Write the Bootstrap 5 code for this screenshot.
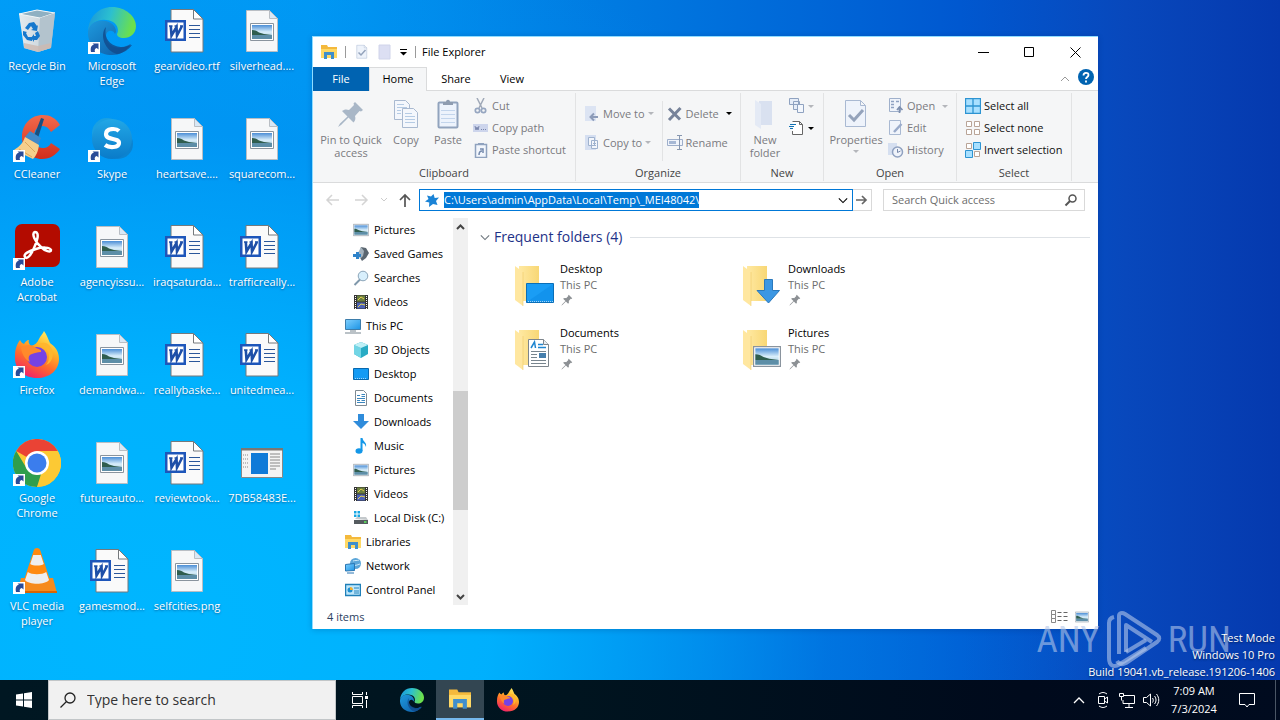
<!DOCTYPE html>
<html lang="en">
<head>
<meta charset="utf-8">
<meta name="viewport" content="width=device-width, initial-scale=1">
<title>File Explorer</title>
<link rel="stylesheet" href="https://cdn.jsdelivr.net/npm/bootstrap@5.3.0/dist/css/bootstrap.min.css">
<style>
body{font-family:"Open Sans","Noto Sans",sans-serif;font-size:11px;line-height:16px;color:#000;
 background:radial-gradient(ellipse 75% 100% at 12% 88%,#00b6ff 0%,rgba(0,180,255,.9) 35%,rgba(0,140,240,.4) 70%,rgba(0,100,220,0) 100%),linear-gradient(90deg,#009ff8 0%,#009af4 24%,#007ee3 45%,#0058d0 75%,#0848bc 88%,#0539ae 100%)}
button,a{color:inherit;text-decoration:none}
.plain{background:none;border:0;padding:0;white-space:nowrap}
svg{display:block;flex:none;overflow:visible}
.s16{width:16px;height:16px}.s32{width:32px;height:32px}.s48{width:48px;height:48px}.s24{width:24px;height:24px}
.stage{min-height:640px}
/* desktop */
.desk-grid{display:grid;grid-template-columns:repeat(4,75px);grid-auto-rows:108px;width:300px}
.desk-item{padding:7px 1px 0 0;color:#fff;text-align:center;line-height:15px;text-shadow:0 1px 2px rgba(0,30,80,.5)}
.desk-item svg{margin-bottom:3px}
/* explorer window */
.explorer{left:312px;top:36px;right:182px;bottom:51px;background:#fff;border:1px solid #8fdcff;border-width:1px 0 0 1px;box-shadow:0 1px 6px rgba(0,20,70,.2)}
.titlebar{height:30px;padding-left:8px}
.titlebar .rule{width:1px;height:12px;background:#9a9a9a}
.titlebar .rule.last{margin-left:7px;margin-right:6px}
.winbtn{width:46px;height:30px}
.tabs{height:24px;border-bottom:1px solid #dadbdc}
.tabbtn{width:58px;height:24px;text-align:center}
.tabbtn.file{width:56px;background:#0063b1;color:#fff}
.tabbtn.active{background:#f5f6f7;border:1px solid #dadbdc;border-bottom:0}
.tabbtn.view{width:54px}
.ribbon{height:92px;background:#f5f6f7;border-bottom:1px solid #dadbdc;color:#7a7a80}
.rgroup{border-right:1px solid #e2e3e4;margin-top:2px;margin-bottom:1px}
.rgroup .caption{color:#444;text-align:center;height:16px;line-height:16px}
.g-clip{width:263px}.g-org{width:165px}.g-new{width:83px}.g-open{width:133px}.g-sel{width:115px}
.big{line-height:13px;padding-top:5px;height:70px;align-items:center;display:flex;flex-direction:column}
.big svg{margin-bottom:3px}
.big.pinned svg{color:#a9b7c7}
.w-pin{width:68px}.w-copy{width:42px}.w-fold{width:40px}.w-prop{width:56px}
.stack{padding-top:2px}
.stack2{padding-top:6px}
.small-btn{height:22px;display:flex;align-items:center;gap:3px}
.tall{height:29px}
.dk{color:#111}
.caret{width:0;height:0;border:3px solid transparent;border-top-color:#b4b6bb;border-bottom:0}
.caret.k{border-top-color:#000}
.sep{width:1px;background:#e2e3e4}
.addr{height:35px;padding-top:6px}
.navs{height:22px;padding:0 8px 0 12px;gap:16px}
.navs2{gap:12px}
.addrbox{height:22px;border:1px solid #0078d7}
.addrbox input,.searchbox input,.task-search input{border:0;outline:0;background:none;padding:0;min-width:0}
.addrbox input{height:16px;line-height:16px;color:#000}
.addrbox input::selection{background:#0078d7;color:#fff}
.go{width:19px;height:22px;border:1px solid #d9d9d9;border-left:0}
.searchbox{width:202px;height:22px;border:1px solid #d9d9d9;padding:0 7px 0 8px;margin-left:11px;margin-right:13px}
.searchbox input::placeholder{color:#6d6d6d;opacity:1}
.tree{width:140px;overflow:hidden}
.tree a{display:flex;align-items:center;height:24px;gap:5px;padding-left:40px;white-space:nowrap}
.tree a.top{padding-left:32px}
.sbar{width:15px;background:#f0f0f0}
.sbar .thumb{height:119px;background:#cdcdcd}
.head{color:#1e3287;font-size:14px;line-height:20px;padding-top:9px}
.fgrid{display:grid;grid-template-columns:repeat(auto-fill,228px);grid-auto-rows:64px;padding:14px 0 0 44px}
.fitem{height:48px}
.muted{color:#6d6d6d}
.pinmark{color:#8c9094}
.status{height:24px;color:#2b4061;padding:0 9px 0 14px}
/* overlays at the lower right of the desktop */
.brand{right:49px;bottom:10px;color:rgba(178,198,234,.6);font-family:"Roboto Condensed","Liberation Sans Narrow","Liberation Sans",sans-serif;font-size:37px;line-height:60px;z-index:5;gap:6px;pointer-events:none}
.build{right:5px;bottom:0;color:#fff;text-align:right;line-height:17px;z-index:6;text-shadow:0 1px 2px rgba(0,0,0,.5)}
/* taskbar */
.taskbar{height:40px;background:linear-gradient(90deg,#001722 0%,#00141f 45%,#000a1c 80%,#000b1f 100%);color:#fff}
.tb{width:48px;height:40px;display:flex;align-items:center;justify-content:center}
.tb.on{background:#334652;border-bottom:2px solid #76b9ed}
.tb.notif{width:44px;margin-right:6px}
.task-search{width:288px;height:40px;background:#f1f1f1;border:1px solid #c2c6c8;color:#222;padding:0 11px;gap:11px}
.task-search input{font-size:14px;color:#222}
.task-search input::placeholder{color:#333;opacity:1}
.tray{width:24px;height:40px;display:flex;align-items:center;justify-content:center}
.clock{width:62px;line-height:18px;text-align:center}
.peek{width:5px;border-left:1px solid #4a5665;height:40px}
</style>
</head>
<body class="d-flex flex-column min-vh-100 overflow-hidden">

<svg width="0" height="0" class="position-absolute" aria-hidden="true">
<defs>
<linearGradient id="fy" x1="0" x2="1"><stop offset="0" stop-color="#ffe9a2"/><stop offset="1" stop-color="#f8d775"/></linearGradient>
<linearGradient id="sky" x1="0" y1="0" x2="0" y2="1"><stop offset="0" stop-color="#4b8ed6"/><stop offset=".5" stop-color="#d9eefa"/><stop offset="1" stop-color="#9cc6dd"/></linearGradient>
<linearGradient id="mon" x1="0" y1="0" x2="1" y2="1"><stop offset="0" stop-color="#7fd0ff"/><stop offset="1" stop-color="#1b93e4"/></linearGradient>
<linearGradient id="eg1" x1="0" y1="0" x2="1" y2=".2"><stop offset="0" stop-color="#1793dc"/><stop offset=".5" stop-color="#2cc0cf"/><stop offset="1" stop-color="#6be04c"/></linearGradient>
<linearGradient id="eg2" x1="0" y1="0" x2="1" y2="1"><stop offset="0" stop-color="#1e9ade"/><stop offset="1" stop-color="#0c59a4"/></linearGradient>
<linearGradient id="ff1" x1=".8" y1="0" x2=".3" y2="1"><stop offset="0" stop-color="#fff36a"/><stop offset=".35" stop-color="#ffb428"/><stop offset=".65" stop-color="#ff6a2c"/><stop offset="1" stop-color="#f0206c"/></linearGradient>
<linearGradient id="bin" x1="0" x2="1"><stop offset="0" stop-color="#e4ebef"/><stop offset=".6" stop-color="#cfd8de"/><stop offset="1" stop-color="#9db5c4"/></linearGradient>
<linearGradient id="red" x1="0" y1="0" x2="0" y2="1"><stop offset="0" stop-color="#f26a4b"/><stop offset="1" stop-color="#d12d1c"/></linearGradient>
<linearGradient id="sk" x1="0" y1="0" x2="0" y2="1"><stop offset="0" stop-color="#22a7e6"/><stop offset="1" stop-color="#0a7bc9"/></linearGradient>

<symbol id="short" viewBox="0 0 48 48"><path d="M0 35h12v12H0z" fill="#fff"/><path d="M3 45c-1-5 1-7 3-7.500L4.500 36.500H10.500v6L8.800 41c-2 .5-2.500 2-1.800 4z" fill="#2a4c98"/></symbol>

<symbol id="recycle" viewBox="0 0 48 48"><path d="M6 7l18-4 18 3-4 35-13 4-14-4z" fill="url(#bin)"/><path d="M6 7l18-4 18 3-15 5z" fill="#8fb0c2" stroke="#f3f7f9"/><path d="M27 11l15-5-4 35-13 4z" fill="#b3c3cd"/><path d="M11 36l14 3 13-3-.5 5-12.500 4-14-4z" fill="#cdb9b0" opacity=".8"/><g fill="#1678cd"><path d="M12 21l4-5 5-1 3 4 1-1-1 6-6-1 2-1-2-3-3 4z"/><path d="M10 24l4 1-1 1 2 4 4 0v4l-5-1-4-5z"/><path d="M22 26l3-2 2 5-3 4-3 0v2l-3-4 3-4v2l2 0z"/></g></symbol>

<symbol id="edge" viewBox="0 0 48 48"><path d="M0 24C1 9 11 0 24 0c14 0 24 10 24 19 0 8-6 12-12 12-5 0-7-2-7-4 2-3 1-9-4-12C15 10 3 14 0 24z" fill="url(#eg1)"/><path d="M0 24C2 15 11 12 18 14c8 2 12 9 9 13-2-5-8-4-9 1-1 9 9 15 18 12 3-1 6-3 7-3C38 45 31 48 24 48 10 48-1 38 0 24z" fill="url(#eg2)"/><path d="M18 20c-7 8-1 24 11 27 7-1 12-5 15-9-3 0-8 4-16 1-9-3-12-11-10-19z" fill="#114a8b" opacity=".8"/></symbol>

<symbol id="word" viewBox="0 0 48 48"><path d="M8 2.500h22.500l9.500 9.500v33H8z" fill="#fafafa" stroke="#75797c"/><path d="M30.500 2.500V12H40z" fill="#fff" stroke="#75797c"/><path d="M26 18.500h11M26 22.500h11M26 26.500h11M26 30.500h11" stroke="#2b579a" stroke-width="1.200"/><path d="M2 13h21v21H2z" fill="#1e56ba"/><path d="M4.500 15.500h16v16h-16z" fill="#fff"/><path d="M6 19h3.500M11.500 19h3M17 19h3" stroke="#1e4fa8" stroke-width="1.500"/><path d="M7.800 19l.7 9.500L13.500 20l.5 8.500 5-9.500" fill="none" stroke="#1e4fa8" stroke-width="2.600"/></symbol>

<symbol id="pic" viewBox="0 0 24 18"><path d="M.5.5h23v17H.5z" fill="#fff" stroke="#8a949e"/><path d="M2 2h20v14H2z" fill="url(#sky)"/><path d="M2 7c3 0 5 1 7 2.500l5 1.500 8 1H2z" fill="#2f5d4e"/><path d="M2 12h20v4H2z" fill="#5d8ea7"/></symbol>
<symbol id="imgfile" viewBox="0 0 48 48"><path d="M8.500 3.500h23l8 8v33h-31z" fill="#f6f7f8" stroke="#b9bec4"/><path d="M31.500 3.500v8h8z" fill="#d8e8f6" stroke="#b9bec4"/><use href="#pic" x="12" y="16" width="24" height="18"/></symbol>

<symbol id="ccleaner" viewBox="0 0 48 48"><path d="M47 10C43 3 37 0 30 0 18 0 9 9 9 22s9 22 20 22c8 0 14-4 18-10l-9-6c-2 4-5 5-8 5-6 0-9-4-9-11s3-11 9-11c3 0 6 2 8 6z" fill="url(#red)"/><path d="M28 3l3 1-6 19-4-2z" fill="#1a4f80"/><path d="M17 16l11 7-3 7-13-8z" fill="#3f8acb"/><path d="M12 22l14 8c-1 7-3 11-6 14L1 35c6-4 9-7 11-13z" fill="#f6cf8c"/><path d="M6 34l13 8M12 27l10 10" stroke="#dda65b"/></symbol>
<symbol id="skype" viewBox="0 0 48 48"><circle cx="19" cy="18" r="15" fill="#1aa0e2"/><circle cx="30" cy="29" r="15" fill="#0c83cf"/><circle cx="24" cy="24" r="20" fill="url(#sk)"/><path d="M31 16c-3-3-13-3-13 3 0 7 13 3 13 9 0 5-10 5-14 2" fill="none" stroke="#fff" stroke-width="4.200"/></symbol>
<symbol id="acrobat" viewBox="0 0 48 48"><rect x="2" y="1" width="45" height="43" rx="7" fill="#b30b00"/><path d="M22 9c5 0 2 10-1 16-3 7-7 12-9 9s4-6 11-8c6-2 14-2 15 1 0 3-6 1-10-3-6-5-10-14-6-15z" fill="none" stroke="#fff" stroke-width="2.500"/></symbol>
<symbol id="firefox" viewBox="0 0 48 48"><path d="M7 9c1 2 2 3 4 4 1-2 3-4 5-4-1 2 0 4 2 6 4-1 6-3 8-7 1-3 4-5 5-8 3 4 4 8 6 12 4 3 9 7 9 16 0 11-9 19-22 19S1 38 2 25C2 18 4 13 7 9z" fill="url(#ff1)"/><circle cx="24" cy="26" r="10" fill="#7542e5"/><path d="M8 17c5-4 11-4 15 0 3 1 6 2 5 4-4 0-6 1-9 2-4 1-4 5-2 8-5-2-8-8-9-14z" fill="#ff8a2b"/><path d="M24 14c7 0 12 5 12 11 0 4-1 7-3 9 8-3 9-15 3-20-3-3-8-3-12 0z" fill="#ffb62e"/></symbol>
<symbol id="chrome" viewBox="0 0 48 48"><circle cx="24" cy="24" r="24" fill="#fcc934"/><path d="M24 24L3.200 12A24 24 0 0 1 44.800 12z" fill="#ea4335"/><path d="M3.200 12L14 30l10 6 4-1-4 13A24 24 0 0 1 3.200 12z" fill="#2f9e4c"/><path d="M24 12h20.800A24 24 0 0 1 24 48l10-18z" fill="#fcc934"/><circle cx="24" cy="24" r="12" fill="#fff"/><circle cx="24" cy="24" r="9.500" fill="#3b7ded"/></symbol>
<symbol id="vlc" viewBox="0 0 48 48"><path d="M8 31h32l4 15H4z" fill="#f68b1e"/><path d="M4 44h40v2H4z" fill="#d96504"/><path d="M24 1c2 0 3 1 3.500 3L37 33c-3 5-23 5-26 0l9.500-29C21 2 22 1 24 1z" fill="#ff8a10"/><path d="M20.200 8h7.600l3 9c-3 2-10.600 2-13.600 0zM14.800 25c4 3 14.400 3 18.400 0l2.800 8c-4 5-20 5-24 0z" fill="#eee"/></symbol>
<symbol id="exe" viewBox="0 0 48 48"><path d="M3.500 9.500h41v29h-41z" fill="#f4f4f4" stroke="#888"/><path d="M3 9h42v2.500H3z" fill="#7b7773"/><path d="M13 14h17v21H13z" fill="#0f7ad8"/><path d="M5 16h6M5 20h6M5 24h6M5 28h6" stroke="#888" stroke-dasharray="1 1"/><path d="M32 15h10M32 18h10M32 21h10M32 24h10M32 27h10M32 30h6" stroke="#888"/></symbol>

<symbol id="lib" viewBox="0 0 16 16"><path d="M0 1h6l1 2h9v11H0z" fill="#f4b93c"/><path d="M0 5h16v9H0z" fill="#ffd966"/><path d="M3 8h10v7h-3v-4H6v4H3z" fill="#3f8fcd"/></symbol>
<symbol id="games" viewBox="0 0 16 16"><path d="M8 1l5 1 3 5-3 5-4 3-3-5z" fill="#5b6670"/><path d="M8 1l3 4-1 5-3 3-2-6z" fill="#a5b3be"/><path d="M3 6h3v2h2v3H6v2H3v-2H0V8h3z" fill="#2f83c9"/></symbol>
<symbol id="search" viewBox="0 0 16 16"><circle cx="10" cy="6" r="4.800" fill="#d8effc" stroke="#8ba5b9"/><path d="M7 9.500L1.500 15" stroke="#7f98ab" stroke-width="2"/></symbol>
<symbol id="film" viewBox="0 0 16 16"><path d="M1 1h14v14H1z" fill="#343434"/><path d="M4 1.500h8v6H4z" fill="#6b7f3f"/><path d="M4 8.500h8v6H4z" fill="#4d63b8"/><path d="M5 6l3-3 3 2M5 13l3-3 4 1" stroke="#e4cf4e" fill="none"/><path d="M2.500 2v13M13.500 2v13" stroke="#fff" stroke-dasharray="1 1"/></symbol>
<symbol id="pc" viewBox="0 0 16 16"><path d="M.5 1.500h15v10H.5z" fill="url(#mon)" stroke="#3d7dab"/><path d="M5 13h6M0 15h16" stroke="#77858f"/></symbol>
<symbol id="cube" viewBox="0 0 16 16"><path d="M8 0l7 3v9l-7 4-7-4V3z" fill="#28abc4"/><path d="M1 3l7 3v10l-7-4z" fill="#72d5e5"/><path d="M1 3l7-3 7 3-7 3z" fill="#bff0f6"/></symbol>
<symbol id="desk" viewBox="0 0 16 16"><path d="M.5 2.500h15v11H.5z" fill="#149bf4" stroke="#0868ae"/><path d="M2 12.500h12" stroke="#fff" stroke-dasharray="1 1" opacity=".6"/></symbol>
<symbol id="doc" viewBox="0 0 16 16"><path d="M2.500.5h8l3 3v12h-11z" fill="#fff" stroke="#7e8a93"/><path d="M4 5.500h3M8.500 4.500H12M8.500 6.500H12M4 8.500h8M4 10.500h3M8.500 10.500H12M4 12.500h8" stroke="#3b86be"/></symbol>
<symbol id="down" viewBox="0 0 16 16"><path d="M5 0h6v7h5l-8 8-8-8h5z" fill="#2f8cdb"/></symbol>
<symbol id="note" viewBox="0 0 16 16"><ellipse cx="6" cy="13" rx="3.500" ry="2.700" fill="#1397e8"/><path d="M7.500 0h2c.5 4 4.500 4 3.500 9-1-3-2-3.500-3.500-4v8h-2z" fill="#1397e8"/></symbol>
<symbol id="disk" viewBox="0 0 16 16"><path d="M1 1h2.500v2.500H1zM4.500 1H7v2.500H4.500zM1 4.500h2.500V7H1zM4.500 4.500H7V7H4.500z" fill="#16a6e2"/><path d="M2 9l2-2h9l2 3z" fill="#c4c9cc"/><path d="M1 10h14v4H1z" fill="#555b5f"/><path d="M11 12h2.500" stroke="#5df05d" stroke-width="1.500"/></symbol>
<symbol id="net" viewBox="0 0 16 16"><circle cx="10.500" cy="5.500" r="5.500" fill="#5ba6d9"/><path d="M8 3c2-1 4 0 6-1M8 7c2 1 4 0 7-1" stroke="#cbe8fa" fill="none"/><path d="M.5 6.500l9-1v7l-9 .5z" fill="url(#mon)" stroke="#2875b2"/><path d="M2 15h7" stroke="#2875b2"/></symbol>
<symbol id="cpl" viewBox="0 0 16 16"><path d="M.5 2.500h15v11H.5z" fill="#bfe7fb" stroke="#1f7fb8" stroke-width="1.500"/><circle cx="5" cy="8" r="2.500" fill="#1d8fd1"/><path d="M9 6h5M9 9h5M9 11h5" stroke="#2484bc"/><path d="M5 8V5a3 3 0 0 1 3 3z" fill="#f3b02f"/></symbol>

<symbol id="pin" viewBox="0 0 32 32"><path d="M20 4l8 8-2 1.500-1.500-.5-4.500 5c1 3 0 5-1.500 6.500l-5-5L6 27l-3 2 2-3.500 7.500-7-5.500-5.500c2-1.500 4-2 7-1l5-5L18.500 5.500z" fill="currentColor"/></symbol>
<symbol id="copy" viewBox="0 0 32 32"><g fill="#f4f7fc" stroke="#a9b9d0"><path d="M4.500 2.500h11l4 4v15h-15z"/><path d="M12.500 10.500h11l4 4v15h-15z"/></g><path d="M7 6.500h7M7 9.500h10M7 12.500h4M7 15.500h4M15 15.500h7M15 18.500h10M15 21.500h10M15 24.500h10" stroke="#b5cbe4"/></symbol>
<symbol id="paste" viewBox="0 0 32 32"><rect x="6.500" y="4.500" width="19" height="25" rx="1" fill="#edf3fc" stroke="#91a3bd" stroke-width="2"/><path d="M11 7V4h3c0-3 4-3 4 0h3v3z" fill="#8e9cb0"/><path d="M9 12.500h14M9 16.500h14M9 20.500h14M9 24.500h14" stroke="#c3d5ec"/></symbol>
<symbol id="cut" viewBox="0 0 16 16"><path d="M4 0l5 10M11 0L6 10" stroke="#a0a9b8" stroke-width="1.500"/><g fill="none" stroke="#96a6c0" stroke-width="1.700"><circle cx="4.500" cy="12.500" r="2.200"/><circle cx="10.500" cy="12.500" r="2.200"/></g></symbol>
<symbol id="cpath" viewBox="0 0 16 16"><path d="M0 4h15v8H0z" fill="#cdd5ec"/><path d="M2 6l1 4 1-3 1 3 1-4" fill="none" stroke="#7986ad"/><path d="M8 9.500h6" stroke="#7986ad" stroke-dasharray="1 1"/></symbol>
<symbol id="pshort" viewBox="0 0 16 16"><path d="M2.500 2.500h11v13h-11z" fill="#f2f6fc" stroke="#8fa2be" stroke-width="1.500"/><path d="M5 1h6v2H5z" fill="#8fa2be"/><path d="M6 13c0-3 1-4 3-4M7 7h3v4" stroke="#7489ac" stroke-width="1.500" fill="none"/></symbol>
<symbol id="move" viewBox="0 0 16 16"><path d="M1 0h11v15H1z" fill="#dce4f3"/><path d="M14 11H7m3-3.500L6.500 11l3.500 3.500" fill="none" stroke="#8d9cb9" stroke-width="2"/></symbol>
<symbol id="copyto" viewBox="0 0 16 16"><path d="M1 0h11v15H1z" fill="#d5dff1"/><path d="M4.500 2.500h6v8h-6zM7.500 5.500h6v8h-6z" fill="#f3f6fb" stroke="#9fb2ce"/><path d="M9 8.500h3M9 10.500h3" stroke="#9fb2ce"/></symbol>
<symbol id="del" viewBox="0 0 16 16"><path d="M2 2.500l11 11M13.500 2L2 14" stroke="#77839a" stroke-width="3"/></symbol>
<symbol id="ren" viewBox="0 0 16 16"><path d="M.5 4.500h15v6H.5z" fill="#f0f4fb" stroke="#9eafcb"/><path d="M2 6h7v3H2z" fill="#a6b8d5"/><path d="M10 .5h5M12.500 1v13M10 14.500h5" stroke="#8797b0"/></symbol>
<symbol id="fold" viewBox="0 0 32 32"><path d="M10 3h13v24H10z" fill="#d9e1f0"/><path d="M6 2l6 4v25l-6-4z" fill="#e4eaf5"/></symbol>
<symbol id="nitem" viewBox="0 0 16 16"><path d="M.5 .5h9v6h-9zM4.500 3.500h6v8h-6z" fill="#e6edf8" stroke="#8fa2c0"/><path d="M8.500 6.500h6v8h-6z" fill="#f3f7fd" stroke="#8fa2c0"/></symbol>
<symbol id="easy" viewBox="0 0 16 16"><path d="M3.500 1.500h7l3 3v10h-10V11M10.500 1.500v3h3" fill="#fff" stroke="#666"/><path d="M1 4.500h6M0 6.500h5M1 8.500h3" stroke="#1473b5"/></symbol>
<symbol id="prop" viewBox="0 0 32 32"><path d="M5.500 2.500h15l5 5v21h-20zM20.500 2.500v5h5" fill="#eef3fb" stroke="#a9b9d2"/><path d="M9 17l5 5 9-10" fill="none" stroke="#94a3bb" stroke-width="3"/></symbol>
<symbol id="open" viewBox="0 0 16 16"><path d="M1.500.5h11v13h-11z" fill="#f0f4fb" stroke="#9fb0cb"/><path d="M3 3.500h3M3 6.500h3M3 9.500h3M8 3.500h3" stroke="#8fa2c2" stroke-width="1.500"/><path d="M11.500 15v-5m-2.500 2L11.500 9l3 3" fill="none" stroke="#7f90af" stroke-width="1.700"/></symbol>
<symbol id="edit" viewBox="0 0 16 16"><path d="M1.500 .5h11v14h-11z" fill="#f0f4fb" stroke="#a9b9d2"/><path d="M6 12L13.500 4" stroke="#9aabca" stroke-width="2.500"/></symbol>
<symbol id="hist" viewBox="0 0 16 16"><path d="M0 1h9v12H0z" fill="#d5dff0"/><circle cx="9.500" cy="10" r="5" fill="#eff3fa" stroke="#8fa1c0" stroke-width="1.500"/><path d="M9.500 7v3.500l3-1.500" fill="none" stroke="#7789aa"/></symbol>
<symbol id="sall" viewBox="0 0 16 16"><path d="M.5.5h15v15H.5zM8 0v16M0 8h16" fill="#a8e0ff" stroke="#2d94d2" stroke-width="1.300"/></symbol>
<symbol id="snone" viewBox="0 0 16 16"><path d="M1.500 1.500h5v5h-5zM9.500 1.500h5v5h-5zM1.500 9.500h5v5h-5zM9.500 9.500h5v5h-5z" fill="#fff" stroke="#b9a497"/></symbol>
<symbol id="sinv" viewBox="0 0 16 16"><path d="M1.500 1.500h5v5h-5zM9.500 9.500h5v5h-5z" fill="#fff" stroke="#b9a497"/><path d="M8.500.5h7v7h-7zM.5 8.500h7v7h-7z" fill="#a8e0ff" stroke="#2d94d2"/></symbol>
<symbol id="bigfold" viewBox="0 0 48 48"><path d="M7 5h20v35H7z" fill="url(#fy)"/><path d="M3 5l8 6v34l-8-6z" fill="#ffe7a0"/><path d="M11 11v34" stroke="#edc65d" opacity=".5"/></symbol>
<symbol id="chev" viewBox="0 0 12 8"><path d="M1 1.500l5 5 5-5" fill="none" stroke="currentColor" stroke-width="1.300"/></symbol>
</defs>
</svg>

<main class="stage position-relative flex-grow-1">
<nav class="desk-grid" aria-label="Desktop">
<a href="#" class="desk-item"><svg class="s48 mx-auto"><use href="#recycle"/></svg>Recycle Bin</a>
<a href="#" class="desk-item"><svg class="s48 mx-auto"><use href="#edge"/><use href="#short"/></svg>Microsoft<br>Edge</a>
<a href="#" class="desk-item"><svg class="s48 mx-auto"><use href="#word"/></svg>gearvideo.rtf</a>
<a href="#" class="desk-item"><svg class="s48 mx-auto"><use href="#imgfile"/></svg>silverhead....</a>
<a href="#" class="desk-item"><svg class="s48 mx-auto"><use href="#ccleaner"/><use href="#short"/></svg>CCleaner</a>
<a href="#" class="desk-item"><svg class="s48 mx-auto"><use href="#skype"/><use href="#short"/></svg>Skype</a>
<a href="#" class="desk-item"><svg class="s48 mx-auto"><use href="#imgfile"/></svg>heartsave....</a>
<a href="#" class="desk-item"><svg class="s48 mx-auto"><use href="#imgfile"/></svg>squarecom...</a>
<a href="#" class="desk-item"><svg class="s48 mx-auto"><use href="#acrobat"/><use href="#short"/></svg>Adobe<br>Acrobat</a>
<a href="#" class="desk-item"><svg class="s48 mx-auto"><use href="#imgfile"/></svg>agencyissu...</a>
<a href="#" class="desk-item"><svg class="s48 mx-auto"><use href="#word"/></svg>iraqsaturda...</a>
<a href="#" class="desk-item"><svg class="s48 mx-auto"><use href="#word"/></svg>trafficreally...</a>
<a href="#" class="desk-item"><svg class="s48 mx-auto"><use href="#firefox"/><use href="#short"/></svg>Firefox</a>
<a href="#" class="desk-item"><svg class="s48 mx-auto"><use href="#imgfile"/></svg>demandwa...</a>
<a href="#" class="desk-item"><svg class="s48 mx-auto"><use href="#word"/></svg>reallybaske...</a>
<a href="#" class="desk-item"><svg class="s48 mx-auto"><use href="#word"/></svg>unitedmea...</a>
<a href="#" class="desk-item"><svg class="s48 mx-auto"><use href="#chrome"/><use href="#short"/></svg>Google<br>Chrome</a>
<a href="#" class="desk-item"><svg class="s48 mx-auto"><use href="#imgfile"/></svg>futureauto...</a>
<a href="#" class="desk-item"><svg class="s48 mx-auto"><use href="#word"/></svg>reviewtook...</a>
<a href="#" class="desk-item"><svg class="s48 mx-auto"><use href="#exe"/></svg>7DB58483E...</a>
<a href="#" class="desk-item"><svg class="s48 mx-auto"><use href="#vlc"/><use href="#short"/></svg>VLC media<br>player</a>
<a href="#" class="desk-item"><svg class="s48 mx-auto"><use href="#word"/></svg>gamesmod...</a>
<a href="#" class="desk-item"><svg class="s48 mx-auto"><use href="#imgfile"/></svg>selfcities.png</a>
</nav>

<section class="explorer position-absolute d-flex flex-column" aria-label="File Explorer">
 <header class="titlebar d-flex align-items-center">
  <svg class="s16"><use href="#lib"/></svg>
  <span class="rule ms-2 me-2"></span>
  <button class="plain" aria-label="Properties"><svg class="s16"><use href="#prop"/></svg></button>
  <button class="plain ms-2" aria-label="New folder"><svg width="14" height="16"><path d="M1 1h11v14H1z" fill="#dcdff3" stroke="#d0d4ea"/></svg></button>
  <button class="plain ms-2" aria-label="Customize toolbar"><svg width="8" height="8"><path d="M0 1.500h7" stroke="#000"/><path d="M0 4h7L3.500 7.500z"/></svg></button>
  <span class="rule last"></span>
  <span>File Explorer</span>
  <div class="ms-auto d-flex">
   <button class="plain winbtn" aria-label="Minimize"><svg class="mx-auto" width="11" height="11"><path d="M0 5.500h11" stroke="#000"/></svg></button>
   <button class="plain winbtn" aria-label="Maximize"><svg class="mx-auto" width="11" height="11"><path d="M.5.5h9v9h-9z" fill="none" stroke="#000"/></svg></button>
   <button class="plain winbtn" aria-label="Close"><svg class="mx-auto" width="11" height="11"><path d="M.5.5l10 10M10.500.5l-10 10" stroke="#000"/></svg></button>
  </div>
 </header>
 <div class="tabs d-flex align-items-center">
  <button class="plain tabbtn file">File</button><button class="plain tabbtn active">Home</button><button class="plain tabbtn">Share</button><button class="plain tabbtn view">View</button>
  <button class="plain ms-auto" aria-label="Collapse ribbon"><svg width="10" height="6"><path d="M1 5l4-4 4 4" fill="none" stroke="#999"/></svg></button>
  <button class="plain ms-2 me-1 mb-1" aria-label="Help"><svg class="s16"><circle cx="8" cy="8" r="8" fill="#0063b1"/><path d="M5.500 6.500C5.500 3 10.500 3 10.500 6c0 2-2.500 2-2.500 4M8 11.500v2" fill="none" stroke="#fff" stroke-width="1.800"/></svg></button>
 </div>
 <div class="ribbon d-flex">
  <div class="rgroup g-clip d-flex flex-column">
   <div class="d-flex flex-grow-1">
    <button class="plain big pinned w-pin ms-1"><svg class="s32"><use href="#pin"/></svg>Pin to Quick<br>access</button>
    <button class="plain big w-copy"><svg class="s32"><use href="#copy"/></svg>Copy</button>
    <button class="plain big w-copy"><svg class="s32"><use href="#paste"/></svg>Paste</button>
    <div class="stack ms-1"><button class="plain small-btn"><svg class="s16"><use href="#cut"/></svg>Cut</button><button class="plain small-btn"><svg class="s16"><use href="#cpath"/></svg>Copy path</button><button class="plain small-btn"><svg class="s16"><use href="#pshort"/></svg>Paste shortcut</button></div>
   </div><div class="caption">Clipboard</div>
  </div>
  <div class="rgroup g-org d-flex flex-column">
   <div class="d-flex flex-grow-1">
    <div class="stack2 ps-2"><button class="plain small-btn tall"><svg class="s16"><use href="#move"/></svg>Move to<i class="caret"></i></button><button class="plain small-btn tall"><svg class="s16"><use href="#copyto"/></svg>Copy to<i class="caret"></i></button></div>
    <span class="sep mt-2 ms-2 mb-1"></span>
    <div class="stack2 ps-1"><button class="plain small-btn tall"><svg class="s16"><use href="#del"/></svg>Delete<i class="caret k ms-1"></i></button><button class="plain small-btn tall"><svg class="s16"><use href="#ren"/></svg>Rename</button></div>
   </div><div class="caption">Organize</div>
  </div>
  <div class="rgroup g-new d-flex flex-column">
   <div class="d-flex flex-grow-1"><button class="plain big w-fold ms-1 me-1"><svg class="s32"><use href="#fold"/></svg>New<br>folder</button>
   <div class="stack"><button class="plain small-btn" aria-label="New item"><svg class="s16"><use href="#nitem"/></svg><i class="caret"></i></button><button class="plain small-btn" aria-label="Easy access"><svg class="s16"><use href="#easy"/></svg><i class="caret k"></i></button></div></div>
   <div class="caption">New</div>
  </div>
  <div class="rgroup g-open d-flex flex-column">
   <div class="d-flex flex-grow-1"><button class="plain big w-prop ms-1 me-1"><svg class="s32"><use href="#prop"/></svg>Properties<i class="caret mt-1"></i></button>
   <div class="stack"><button class="plain small-btn"><svg class="s16"><use href="#open"/></svg>Open<i class="caret ms-1"></i></button><button class="plain small-btn"><svg class="s16"><use href="#edit"/></svg>Edit</button><button class="plain small-btn"><svg class="s16"><use href="#hist"/></svg>History</button></div></div>
   <div class="caption">Open</div>
  </div>
  <div class="rgroup g-sel d-flex flex-column">
   <div class="stack flex-grow-1 ps-2 dk"><button class="plain small-btn"><svg class="s16"><use href="#sall"/></svg>Select all</button><button class="plain small-btn"><svg class="s16"><use href="#snone"/></svg>Select none</button><button class="plain small-btn"><svg class="s16"><use href="#sinv"/></svg>Invert selection</button></div>
   <div class="caption">Select</div>
  </div>
 </div>
 <div class="addr d-flex align-items-start">
  <div class="navs d-flex align-items-center">
   <button class="plain" aria-label="Back"><svg width="14" height="12"><path d="M14 6H2m5-5L2 6l5 5" fill="none" stroke="#d4d4d4" stroke-width="1.500"/></svg></button>
   <div class="navs2 d-flex align-items-center">
   <button class="plain" aria-label="Forward"><svg width="14" height="12"><path d="M0 6h12M7 1l5 5-5 5" fill="none" stroke="#d4d4d4" stroke-width="1.500"/></svg></button>
   <button class="plain" aria-label="Recent"><svg width="6" height="4"><path d="M0 0l3 3 3-3" fill="none" stroke="#ccc"/></svg></button>
   <button class="plain" aria-label="Up"><svg width="12" height="14"><path d="M6 14V2M1 7l5-5 5 5" fill="none" stroke="#555" stroke-width="1.700"/></svg></button>
   </div>
  </div>
  <div class="addrbox d-flex align-items-center flex-grow-1 px-1">
   <svg class="s16 me-1"><path d="M9.500 2l1.200 4 4.300-.5-3 3.500 1.500 4-4.500-1L5 15l.3-4.500L1 9.500 4.500 7 3 3.500l4 1z" fill="#1a83d6"/></svg>
   <input id="path" class="flex-grow-1" aria-label="Address" value="C:\Users\admin\AppData\Local\Temp\_MEI48042\" spellcheck="false">
   <button class="plain" aria-label="Previous locations"><svg width="10" height="7"><use href="#chev"/></svg></button>
  </div>
  <button class="plain go" aria-label="Go"><svg class="mx-auto" width="12" height="10"><path d="M0 5h10M6 1l4 4-4 4" fill="none" stroke="#666" stroke-width="1.700"/></svg></button>
  <div class="searchbox d-flex align-items-center"><input class="flex-grow-1" placeholder="Search Quick access" aria-label="Search Quick access"><svg width="12" height="12"><circle cx="7.500" cy="4.500" r="3.500" fill="none" stroke="#555" stroke-width="1.500"/><path d="M5 7L.5 11.500" stroke="#555" stroke-width="2"/></svg></div>
 </div>
 <div class="d-flex flex-grow-1">
  <nav class="tree" aria-label="Navigation pane">
   <a href="#"><svg class="s16"><use href="#pic"/></svg>Pictures</a>
   <a href="#"><svg class="s16"><use href="#games"/></svg>Saved Games</a>
   <a href="#"><svg class="s16"><use href="#search"/></svg>Searches</a>
   <a href="#"><svg class="s16"><use href="#film"/></svg>Videos</a>
   <a href="#" class="top"><svg class="s16"><use href="#pc"/></svg>This PC</a>
   <a href="#"><svg class="s16"><use href="#cube"/></svg>3D Objects</a>
   <a href="#"><svg class="s16"><use href="#desk"/></svg>Desktop</a>
   <a href="#"><svg class="s16"><use href="#doc"/></svg>Documents</a>
   <a href="#"><svg class="s16"><use href="#down"/></svg>Downloads</a>
   <a href="#"><svg class="s16"><use href="#note"/></svg>Music</a>
   <a href="#"><svg class="s16"><use href="#pic"/></svg>Pictures</a>
   <a href="#"><svg class="s16"><use href="#film"/></svg>Videos</a>
   <a href="#"><svg class="s16"><use href="#disk"/></svg>Local Disk (C:)</a>
   <a href="#" class="top"><svg class="s16"><use href="#lib"/></svg>Libraries</a>
   <a href="#" class="top"><svg class="s16"><use href="#net"/></svg>Network</a>
   <a href="#" class="top"><svg class="s16"><use href="#cpl"/></svg>Control Panel</a>
  </nav>
  <div class="sbar d-flex flex-column" aria-hidden="true">
   <svg class="mx-auto mt-1" width="9" height="10"><path d="M1 7l3.500-3.500L8 7" fill="none" stroke="#444" stroke-width="2"/></svg>
   <div style="flex:158"></div><div class="thumb"></div><div style="flex:83"></div>
   <svg class="mx-auto mb-1" width="9" height="8"><path d="M1 2l3.500 3.500L8 2" fill="none" stroke="#444" stroke-width="2"/></svg>
  </div>
  <div class="flex-grow-1">
   <div class="head d-flex align-items-center ps-2 pe-2"><svg class="ms-1 me-1 text-secondary" width="10" height="7"><use href="#chev"/></svg><span>Frequent folders (4)</span><span class="flex-grow-1 border-top ms-2"></span></div>
   <div class="fgrid">
    <a href="#" class="fitem d-flex"><svg class="s48"><use href="#bigfold"/><path d="M14.500 22.500h27v19h-27z" fill="#1a9df5" stroke="#0a6fb8"/><path d="M15 41L41 23v18z" fill="#0a8ae6" opacity=".5"/><path d="M16 40.500h25" stroke="#fff" stroke-dasharray="1 1" opacity=".6"/></svg><span>Desktop<br><span class="muted">This PC</span><svg class="pinmark" width="14" height="14"><use href="#pin"/></svg></span></a>
    <a href="#" class="fitem d-flex"><svg class="s48"><use href="#bigfold"/><path d="M24.500 18.500h8v11h7L28.500 42 17 29.500h7.500z" fill="#3c97e3" stroke="#2a79bd"/></svg><span>Downloads<br><span class="muted">This PC</span><svg class="pinmark" width="14" height="14"><use href="#pin"/></svg></span></a>
    <a href="#" class="fitem d-flex"><svg class="s48"><use href="#bigfold"/><path d="M16.500 14.500h15l5 5v22h-20z" fill="#fff" stroke="#7d858c"/><path d="M31.500 14.500v5h5" fill="#e7edf2" stroke="#7d858c"/><path d="M19 23l3.500-6 1 6M26 19.500h5M26 22.500h8" stroke="#1e85d0" stroke-width="1.500" fill="none"/><path d="M19 26.500h15M19 29.500h6M19 32.500h6M19 35.500h15M19 38.500h15" stroke="#78858e"/><path d="M27 28h7v5h-7z" fill="#457eac"/></svg><span>Documents<br><span class="muted">This PC</span><svg class="pinmark" width="14" height="14"><use href="#pin"/></svg></span></a>
    <a href="#" class="fitem d-flex"><svg class="s48"><use href="#bigfold"/><use href="#pic" x="13" y="21" width="28" height="21"/></svg><span>Pictures<br><span class="muted">This PC</span><svg class="pinmark" width="14" height="14"><use href="#pin"/></svg></span></a>
   </div>
  </div>
 </div>
 <footer class="status d-flex align-items-center"><span>4 items</span>
  <button class="plain ms-auto" aria-label="Details view"><svg class="s16"><path d="M.5 1.500h4v4h-4zM.5 5.500h4v4h-4zM.5 9.500h4v4h-4z" fill="none" stroke="#888"/><path d="M6.500 3.500h10M6.500 7.500h10M6.500 11.500h10" stroke="#666" stroke-dasharray="4 2"/></svg></button>
  <button class="plain ms-2" aria-label="Large icons view"><svg width="14" height="12"><use href="#pic"/></svg></button></footer>
</section>

<div class="brand position-absolute d-flex align-items-center">ANY
 <svg width="56" height="60" viewBox="0 0 56 60" fill="none" stroke="currentColor" stroke-width="4" stroke-linejoin="round"><path d="M8 7c-4 1-5 3-5 6v35c0 8 5 10 11 6l26-16"/><path d="M13 44V6c0-3 3-4 6-2l32 21c3 2 3 5 0 7L20 53c-4 2-7 1-9-2"/><path d="M20 42V15l26 17"/><path d="M20 42l20-12"/></svg>
 RUN</div>
<div class="build position-absolute">Test Mode<br>Windows 10 Pro<br>Build 19041.vb_release.191206-1406</div>
</main>

<footer class="taskbar d-flex align-items-center">
 <button class="plain tb" aria-label="Start"><svg class="s16"><path d="M0 2.500l7-1v6H0zM8 1.300L16 0v7.500H8zM0 8.500h7v6l-7-1zM8 8.500h8V16l-8-1.300z" fill="#fff"/></svg></button>
 <label class="task-search d-flex align-items-center"><svg class="s16"><circle cx="10" cy="6" r="5" fill="none" stroke="#222" stroke-width="1.300"/><path d="M6.500 9.500L.5 15.500" stroke="#222" stroke-width="1.300"/></svg><input class="flex-grow-1" placeholder="Type here to search" aria-label="Type here to search"></label>
 <button class="plain tb" aria-label="Task View"><svg class="s16"><path d="M.5 4.500h10v7H.5zM.5 0v2.500h10V0M.5 16v-2.500h10V16M14.500 0v3M14.500 8v8" fill="none" stroke="#fff"/><path d="M13 4h3v3h-3z" fill="#fff"/></svg></button>
 <button class="plain tb ms-1" aria-label="Microsoft Edge"><svg class="s24"><use href="#edge"/></svg></button>
 <button class="plain tb on" aria-label="File Explorer"><svg width="22" height="22"><use href="#lib"/></svg></button>
 <button class="plain tb" aria-label="Firefox"><svg class="s24"><use href="#firefox"/></svg></button>
 <div class="ms-auto d-flex align-items-center">
  <button class="plain tray" aria-label="Hidden icons"><svg width="12" height="8"><path d="M1 7l5-5 5 5" fill="none" stroke="#fff" stroke-width="1.300"/></svg></button>
  <button class="plain tray" aria-label="Meet Now"><svg class="s16" fill="none" stroke="#fff"><path d="M3.500 4.500h6v7h-6zM9.500 7l3-2v6l-3-2M4 2c3-2 5-2 8 0M4 14c3 2 5 2 8 0"/></svg></button>
  <button class="plain tray" aria-label="Network"><svg class="s16" fill="none" stroke="#fff"><path d="M5 3.500h10.500v8H4V8M10 12v3M6 15.500h8M.5 1.500h4v3h-4zM2.500 4.500v4"/></svg></button>
  <button class="plain tray" aria-label="Volume"><svg class="s16" fill="none" stroke="#fff"><path d="M.5 5.500h3l4-3.500v12l-4-3.500h-3zM9.500 6c1 1.500 1 3 0 4.500M11.500 4c2 2.500 2 5.500 0 8M13.500 2c3 4 3 8 0 12"/></svg></button>
  <div class="clock">7:09 AM<br>7/3/2024</div>
  <button class="plain tb notif" aria-label="Notifications"><svg width="16" height="16"><path d="M.5 1.500h15v11H10L8 15l-2-2.500H.5z" fill="none" stroke="#fff"/></svg></button>
  <div class="peek"></div>
 </div>
</footer>

<script src="https://cdn.jsdelivr.net/npm/bootstrap@5.3.0/dist/js/bootstrap.bundle.min.js"></script>
<script>
const path=document.getElementById('path');path.focus();path.select();
</script>
</body>
</html>
